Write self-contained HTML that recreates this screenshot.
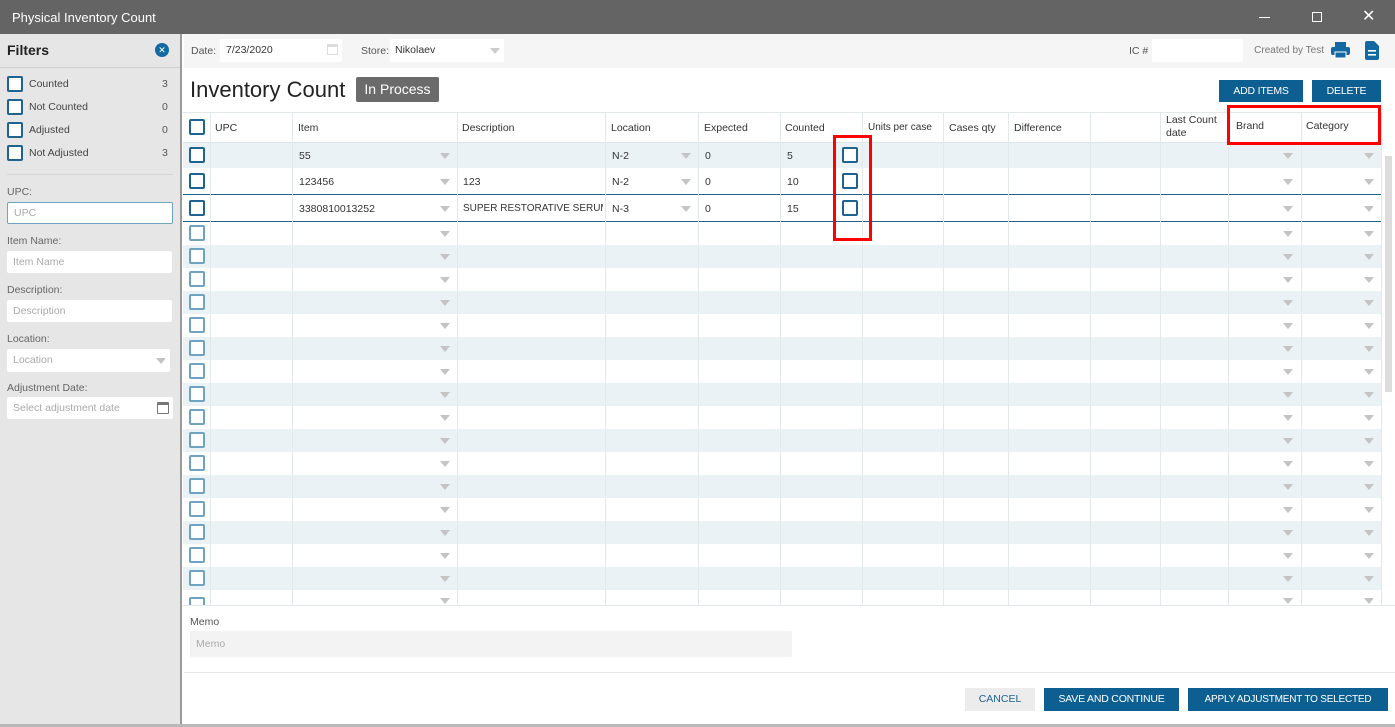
<!DOCTYPE html>
<html><head><meta charset="utf-8"><style>
*{box-sizing:border-box;margin:0;padding:0}
body{width:1395px;height:727px;overflow:hidden;font-family:"Liberation Sans",sans-serif;font-size:10.5px;color:#333;background:#fff;position:relative}
.a{position:absolute}
.cb{position:absolute;width:16px;height:16px;border:2px solid #1f6391;border-radius:2px;background:#fff}
.cbl{border-color:#6ea3c2}
.ar{position:absolute;width:0;height:0;border-left:5px solid transparent;border-right:5px solid transparent;border-top:6px solid #c4c4c4}
.inp{position:absolute;background:#fff;border-radius:2px;color:#aaa;font-size:10.5px;padding-left:6px;line-height:22px}
.lbl{position:absolute;font-size:10.5px;color:#555}
.btn{position:absolute;background:#0d5f92;color:#fff;font-size:10.5px;letter-spacing:-0.2px;text-align:center;line-height:22px;white-space:nowrap}
.vl{position:absolute;top:113px;height:493px;width:1px;background:#e3e8eb}
.row{position:absolute;left:183px;width:1198px;height:23px}
.s{background:#eaf2f6}
.t{position:absolute;font-size:10.5px;color:#333}
</style></head><body>
<div class="a" style="left:0;top:0;width:1395px;height:34px;background:#646464"></div>
<div class="a" style="left:12px;top:10px;color:#fff;font-size:13px">Physical Inventory Count</div>
<div class="a" style="left:1259px;top:17px;width:11px;height:1px;background:#fff"></div>
<div class="a" style="left:1312px;top:12px;width:10px;height:10px;border:1px solid #fff"></div>
<div class="a" style="left:1362px;top:6px;color:#fff;font-size:16px">✕</div>
<div class="a" style="left:0;top:34px;width:182px;height:693px;background:#e6e6e6;border-right:2px solid #9a9a9a"></div>
<div class="a" style="left:7px;top:42px;font-weight:bold;font-size:14px;color:#222">Filters</div>
<div class="a" style="left:155px;top:43px;width:14px;height:14px;border-radius:50%;background:#136aa3;color:#fff;font-size:9px;text-align:center;line-height:14px">✕</div>
<div class="a" style="left:0;top:67px;width:180px;height:1px;background:#d0d0d0"></div>
<div class="cb" style="left:7px;top:76px"></div><div class="lbl" style="left:29px;top:78px;color:#444">Counted</div><div class="lbl" style="left:162px;top:78px">3</div>
<div class="cb" style="left:7px;top:99px"></div><div class="lbl" style="left:29px;top:101px;color:#444">Not Counted</div><div class="lbl" style="left:162px;top:101px">0</div>
<div class="cb" style="left:7px;top:122px"></div><div class="lbl" style="left:29px;top:124px;color:#444">Adjusted</div><div class="lbl" style="left:162px;top:124px">0</div>
<div class="cb" style="left:7px;top:145px"></div><div class="lbl" style="left:29px;top:147px;color:#444">Not Adjusted</div><div class="lbl" style="left:162px;top:147px">3</div>
<div class="a" style="left:7px;top:174px;width:166px;height:1px;background:#d6d6d6"></div>
<div class="lbl" style="left:7px;top:186px;color:#666">UPC:</div>
<div class="inp" style="left:7px;top:202px;width:166px;height:22px;border:1px solid #6ea3c2;line-height:20px">UPC</div>
<div class="lbl" style="left:7px;top:235px;color:#666">Item Name:</div>
<div class="inp" style="left:7px;top:251px;width:165px;height:22px">Item Name</div>
<div class="lbl" style="left:7px;top:284px;color:#666">Description:</div>
<div class="inp" style="left:7px;top:300px;width:165px;height:22px">Description</div>
<div class="lbl" style="left:7px;top:333px;color:#666">Location:</div>
<div class="inp" style="left:7px;top:349px;width:163px;height:23px">Location</div><div class="ar" style="left:156px;top:358px"></div>
<div class="lbl" style="left:7px;top:382px;color:#666">Adjustment Date:</div>
<div class="inp" style="left:7px;top:397px;width:166px;height:22px">Select adjustment date</div>
<div class="a" style="left:157px;top:402px;width:12px;height:12px;border:1.5px solid #777;border-top-width:3px;border-radius:1px"></div>
<div class="a" style="left:184px;top:34px;width:1211px;height:34px;background:#f5f5f5"></div>
<div class="lbl" style="left:191px;top:45px">Date:</div>
<div class="inp" style="left:220px;top:39px;width:122px;height:23px;color:#333">7/23/2020</div>
<div class="a" style="left:327px;top:44px;width:11px;height:11px;border:1px solid #ddd;border-top-width:3px"></div>
<div class="lbl" style="left:361px;top:45px">Store:</div>
<div class="inp" style="left:390px;top:39px;width:114px;height:23px;color:#333;padding-left:5px">Nikolaev</div><div class="ar" style="left:490px;top:48px;border-top-color:#ccc"></div>
<div class="lbl" style="left:1129px;top:45px">IC #</div>
<div class="inp" style="left:1152px;top:39px;width:91px;height:23px"></div>
<div class="lbl" style="left:1230px;width:94px;text-align:right;top:45px;color:#777;font-size:10px">Created by Test</div>
<svg class="a" style="left:1331px;top:41px" width="19" height="18" viewBox="0 0 19 18"><rect x="4" y="1" width="11" height="5" fill="#136aa3"/><rect x="0" y="6" width="19" height="8" rx="2" fill="#136aa3"/><rect x="4" y="11" width="11" height="6" fill="#136aa3" stroke="#fff" stroke-width="1"/></svg>
<svg class="a" style="left:1365px;top:41px" width="14" height="19" viewBox="0 0 14 19"><path d="M0 2Q0 0 2 0H9L14 5V17Q14 19 12 19H2Q0 19 0 17Z" fill="#136aa3"/><rect x="3" y="9" width="8" height="1.6" fill="#fff"/><rect x="3" y="13" width="8" height="1.6" fill="#fff"/></svg>
<div class="a" style="left:190px;top:77px;font-size:22px;color:#222">Inventory Count</div>
<div class="a" style="left:356px;top:77px;width:83px;height:25px;background:#6b6b6b;color:#fff;font-size:14px;text-align:center;line-height:25px;border-radius:2px">In Process</div>
<div class="btn" style="left:1219px;top:80px;width:84px;height:22px">ADD ITEMS</div>
<div class="btn" style="left:1312px;top:80px;width:69px;height:22px">DELETE</div>
<div class="a" style="left:183px;top:112px;width:1198px;height:1px;background:#e3e8eb"></div>
<div class="a" style="left:183px;top:142px;width:1198px;height:1px;background:#dfe5e8"></div>
<div class="row s" style="top:143px;height:25px"></div>
<div class="a" style="left:183px;top:194px;width:1198px;height:1px;background:#1f6391"></div>
<div class="a" style="left:183px;top:221px;width:1198px;height:1px;background:#1f6391"></div>
<div class="row s" style="top:245px"></div><div class="row s" style="top:291px"></div><div class="row s" style="top:337px"></div><div class="row s" style="top:383px"></div><div class="row s" style="top:429px"></div><div class="row s" style="top:475px"></div><div class="row s" style="top:521px"></div><div class="row s" style="top:567px"></div>
<div class="vl" style="left:210px"></div><div class="vl" style="left:292px"></div><div class="vl" style="left:457px"></div><div class="vl" style="left:605px"></div><div class="vl" style="left:698px"></div><div class="vl" style="left:780px"></div><div class="vl" style="left:862px"></div><div class="vl" style="left:943px"></div><div class="vl" style="left:1008px"></div><div class="vl" style="left:1090px"></div><div class="vl" style="left:1160px"></div><div class="vl" style="left:1228px"></div><div class="vl" style="left:1301px"></div><div class="vl" style="left:1381px"></div>
<div class="a" style="left:183px;top:605px;width:1212px;height:1px;background:#e3e8eb"></div>
<div class="cb" style="left:189px;top:119px"></div>
<div class="t" style="left:215px;top:122px">UPC</div><div class="t" style="left:298px;top:122px">Item</div><div class="t" style="left:462px;top:122px">Description</div><div class="t" style="left:611px;top:122px">Location</div><div class="t" style="left:704px;top:122px">Expected</div><div class="t" style="left:785px;top:122px">Counted</div><div class="t" style="left:868px;top:122px;font-size:10px">Units per case</div><div class="t" style="left:949px;top:122px">Cases qty</div><div class="t" style="left:1014px;top:122px">Difference</div><div class="t" style="left:1166px;top:114px;line-height:13px">Last Count<br>date</div><div class="t" style="left:1236px;top:120px">Brand</div><div class="t" style="left:1306px;top:120px">Category</div>
<div class="cb" style="left:189px;top:147px"></div><div class="t" style="left:299px;top:150px">55</div><div class="t" style="left:612px;top:150px">N-2</div><div class="t" style="left:705px;top:150px">0</div><div class="t" style="left:787px;top:150px">5</div><div class="cb" style="left:842px;top:147px"></div>
<div class="cb" style="left:189px;top:173px"></div><div class="t" style="left:299px;top:176px">123456</div><div class="t" style="left:463px;top:176px">123</div><div class="t" style="left:612px;top:176px">N-2</div><div class="t" style="left:705px;top:176px">0</div><div class="t" style="left:787px;top:176px">10</div><div class="cb" style="left:842px;top:173px"></div>
<div class="cb" style="left:189px;top:200px"></div><div class="t" style="left:299px;top:203px">3380810013252</div><div class="t" style="left:463px;top:203px;width:140px;overflow:hidden;white-space:nowrap;font-size:10px">SUPER RESTORATIVE SERUM</div><div class="t" style="left:612px;top:203px">N-3</div><div class="t" style="left:705px;top:203px">0</div><div class="t" style="left:787px;top:203px">15</div><div class="cb" style="left:842px;top:200px"></div>
<div class="ar" style="left:681px;top:153px"></div><div class="ar" style="left:681px;top:179px"></div><div class="ar" style="left:681px;top:206px"></div>
<div class="ar" style="left:440px;top:153px"></div><div class="ar" style="left:1283px;top:153px"></div><div class="ar" style="left:1364px;top:153px"></div>
<div class="ar" style="left:440px;top:179px"></div><div class="ar" style="left:1283px;top:179px"></div><div class="ar" style="left:1364px;top:179px"></div>
<div class="ar" style="left:440px;top:206px"></div><div class="ar" style="left:1283px;top:206px"></div><div class="ar" style="left:1364px;top:206px"></div>
<div class="cb cbl" style="left:189px;top:225px"></div><div class="ar" style="left:440px;top:231px"></div><div class="ar" style="left:1283px;top:231px"></div><div class="ar" style="left:1364px;top:231px"></div>
<div class="cb cbl" style="left:189px;top:248px"></div><div class="ar" style="left:440px;top:254px"></div><div class="ar" style="left:1283px;top:254px"></div><div class="ar" style="left:1364px;top:254px"></div>
<div class="cb cbl" style="left:189px;top:271px"></div><div class="ar" style="left:440px;top:277px"></div><div class="ar" style="left:1283px;top:277px"></div><div class="ar" style="left:1364px;top:277px"></div>
<div class="cb cbl" style="left:189px;top:294px"></div><div class="ar" style="left:440px;top:300px"></div><div class="ar" style="left:1283px;top:300px"></div><div class="ar" style="left:1364px;top:300px"></div>
<div class="cb cbl" style="left:189px;top:317px"></div><div class="ar" style="left:440px;top:323px"></div><div class="ar" style="left:1283px;top:323px"></div><div class="ar" style="left:1364px;top:323px"></div>
<div class="cb cbl" style="left:189px;top:340px"></div><div class="ar" style="left:440px;top:346px"></div><div class="ar" style="left:1283px;top:346px"></div><div class="ar" style="left:1364px;top:346px"></div>
<div class="cb cbl" style="left:189px;top:363px"></div><div class="ar" style="left:440px;top:369px"></div><div class="ar" style="left:1283px;top:369px"></div><div class="ar" style="left:1364px;top:369px"></div>
<div class="cb cbl" style="left:189px;top:386px"></div><div class="ar" style="left:440px;top:392px"></div><div class="ar" style="left:1283px;top:392px"></div><div class="ar" style="left:1364px;top:392px"></div>
<div class="cb cbl" style="left:189px;top:409px"></div><div class="ar" style="left:440px;top:415px"></div><div class="ar" style="left:1283px;top:415px"></div><div class="ar" style="left:1364px;top:415px"></div>
<div class="cb cbl" style="left:189px;top:432px"></div><div class="ar" style="left:440px;top:438px"></div><div class="ar" style="left:1283px;top:438px"></div><div class="ar" style="left:1364px;top:438px"></div>
<div class="cb cbl" style="left:189px;top:455px"></div><div class="ar" style="left:440px;top:461px"></div><div class="ar" style="left:1283px;top:461px"></div><div class="ar" style="left:1364px;top:461px"></div>
<div class="cb cbl" style="left:189px;top:478px"></div><div class="ar" style="left:440px;top:484px"></div><div class="ar" style="left:1283px;top:484px"></div><div class="ar" style="left:1364px;top:484px"></div>
<div class="cb cbl" style="left:189px;top:501px"></div><div class="ar" style="left:440px;top:507px"></div><div class="ar" style="left:1283px;top:507px"></div><div class="ar" style="left:1364px;top:507px"></div>
<div class="cb cbl" style="left:189px;top:524px"></div><div class="ar" style="left:440px;top:530px"></div><div class="ar" style="left:1283px;top:530px"></div><div class="ar" style="left:1364px;top:530px"></div>
<div class="cb cbl" style="left:189px;top:547px"></div><div class="ar" style="left:440px;top:553px"></div><div class="ar" style="left:1283px;top:553px"></div><div class="ar" style="left:1364px;top:553px"></div>
<div class="cb cbl" style="left:189px;top:570px"></div><div class="ar" style="left:440px;top:576px"></div><div class="ar" style="left:1283px;top:576px"></div><div class="ar" style="left:1364px;top:576px"></div>
<div class="a" style="left:183px;top:593px;width:1200px;height:12px;overflow:hidden"><div class="cb cbl" style="left:6px;top:4px"></div><div class="ar" style="left:257px;top:5px"></div><div class="ar" style="left:1100px;top:5px"></div><div class="ar" style="left:1181px;top:5px"></div></div>
<div class="a" style="left:1385px;top:156px;width:7px;height:236px;background:#dcdcdc"></div>
<div class="a" style="left:833px;top:135px;width:39px;height:106px;border:3px solid #f00"></div>
<div class="a" style="left:1227px;top:105px;width:154px;height:40px;border:3px solid #f00"></div>
<div class="lbl" style="left:190px;top:616px;color:#555">Memo</div>
<div class="inp" style="left:190px;top:631px;width:602px;height:26px;background:#f3f3f3;line-height:26px">Memo</div>
<div class="a" style="left:184px;top:672px;width:1211px;height:1px;background:#e8e8e8"></div>
<div class="a" style="left:965px;top:688px;width:70px;height:23px;background:#ececec;color:#1f6391;font-size:10.5px;text-align:center;line-height:23px">CANCEL</div>
<div class="btn" style="left:1044px;top:688px;width:135px;height:23px;line-height:23px">SAVE AND CONTINUE</div>
<div class="btn" style="left:1188px;top:688px;width:200px;height:23px;line-height:23px;font-size:10px">APPLY ADJUSTMENT TO SELECTED</div>
<div class="a" style="left:0;top:724px;width:1395px;height:3px;background:#b8b8b8"></div>
</body></html>
